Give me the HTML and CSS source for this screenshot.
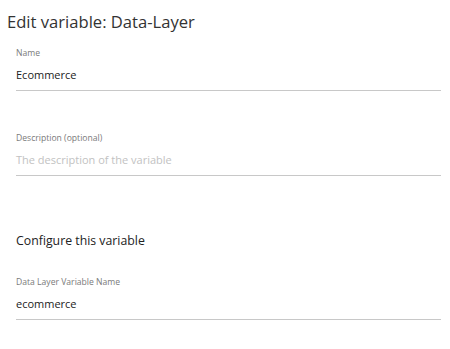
FILE: index.html
```html
<!DOCTYPE html>
<html lang="en">
<head>
    <meta charset="UTF-8">
    <title>Edit variable</title>
    <link rel="stylesheet" href="styles.css">
</head>
<body>
    <div class="panel">
        <h1 class="title">Edit variable: Data-Layer</h1>

        <div class="field">
            <label class="field-label">Name</label>
            <div class="field-value">Ecommerce</div>
        </div>

        <div class="field field-desc">
            <label class="field-label">Description (optional)</label>
            <div class="field-value placeholder">The description of the variable</div>
        </div>

        <h2 class="section-title">Configure this variable</h2>

        <div class="field">
            <label class="field-label">Data Layer Variable Name</label>
            <div class="field-value">ecommerce</div>
        </div>
    </div>
</body>
</html>
```

FILE: styles.css
```css
* {
    margin: 0;
    padding: 0;
    box-sizing: border-box;
}

body {
    width: 450px;
    height: 349px;
    background: #fff;
    font-family: 'Open Sans', 'Noto Sans', sans-serif;
    color: #222;
    overflow: hidden;
}

.panel {
    padding: 10px 9px 0 7px;
}

.title {
    font-size: 16.6px;
    font-weight: 400;
    line-height: 24px;
    color: #333;
    margin-bottom: 13px;
}

.field {
    margin-left: 9px;
    border-bottom: 1px solid #c8c8c8;
    padding-bottom: 7px;
}

.field-label {
    display: block;
    font-size: 8.6px;
    line-height: 12px;
    color: #7a7a7a;
    margin-bottom: 8px;
}

.field-value {
    font-size: 11px;
    line-height: 16px;
    color: #222;
}

.field-value.placeholder {
    color: #c2c2c2;
}

.field-desc {
    margin-top: 41px;
}

.section-title {
    margin: 56px 0 26px 9px;
    font-size: 12.3px;
    font-weight: 400;
    line-height: 18px;
    color: #222;
}
```
